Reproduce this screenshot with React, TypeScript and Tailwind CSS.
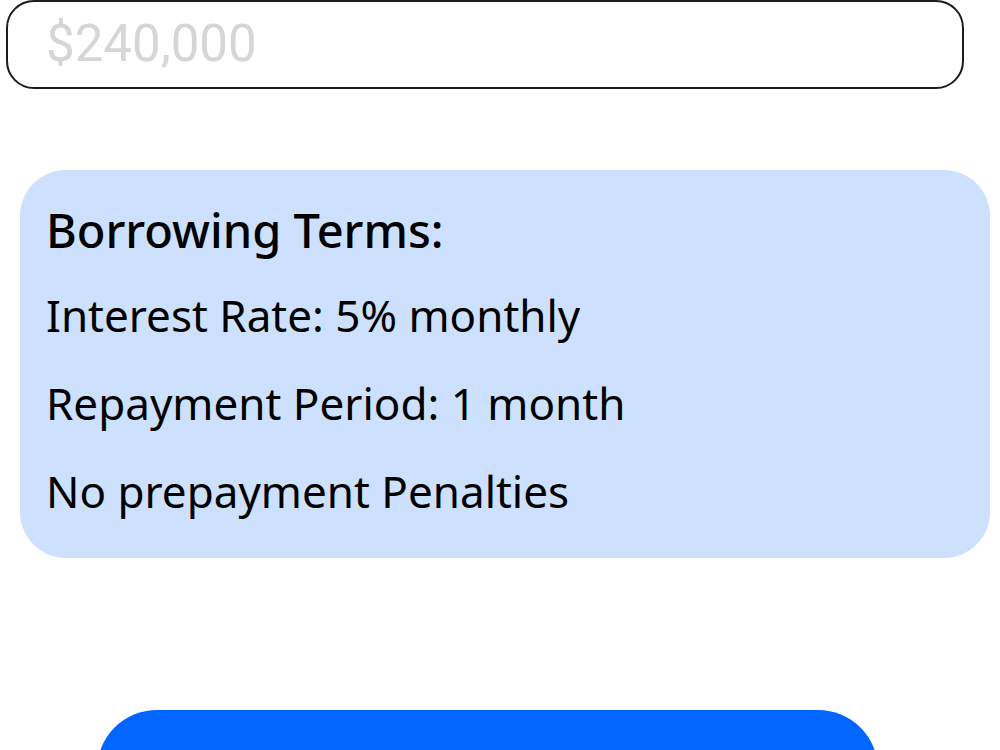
import React from 'react';

const termLines = [
  'Interest Rate: 5% monthly',
  'Repayment Period: 1 month',
  'No prepayment Penalties',
];

function AmountInput() {
  return (
    <div className="pl-[6px] w-[964px]">
      <input
        type="text"
        placeholder="$240,000"
        className="w-full h-[89px] rounded-[28px] border-2 border-[#1c1c1c] bg-white pl-[38px] pb-[2px] text-[51px] text-[#222] placeholder:text-[#d6d6d6] outline-none"
        style={{ fontFamily: 'Roboto, "Liberation Sans", sans-serif' }}
      />
    </div>
  );
}

function BorrowingTerms() {
  return (
    <div className="ml-[20px] w-[970px] rounded-[46px] bg-[#cde0fd] px-[26px] py-[22px] text-black">
      <h2 className="text-[47px] leading-[80px] font-medium -mt-[2px] mb-[2px]">Borrowing Terms:</h2>
      {termLines.map((line) => (
        <p key={line} className="text-[44px] leading-[88px] -mt-[1px] mb-[1px]">
          {line}
        </p>
      ))}
    </div>
  );
}

export default function App() {
  return (
    <div
      className="min-h-screen bg-white flex flex-col"
      style={{ fontFamily: '"Noto Sans", "Open Sans", sans-serif' }}
    >
      <AmountInput />
      <div className="mt-[81px]">
        <BorrowingTerms />
      </div>
      {/* submit button, only its top edge is in view */}
      <button
        type="submit"
        aria-label="Continue"
        className="mt-[152px] ml-[97px] w-[781px] h-[130px] rounded-[60px] bg-[#0066ff]"
      />
    </div>
  );
}
